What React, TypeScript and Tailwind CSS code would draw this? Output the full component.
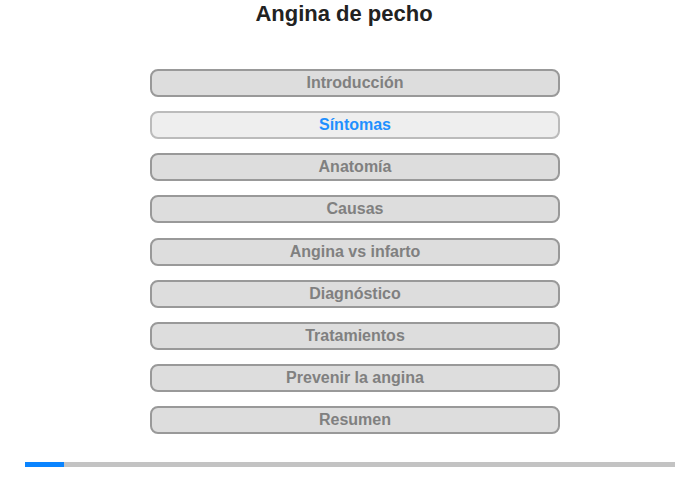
import React from "react";

const items = [
  "Introducción",
  "Síntomas",
  "Anatomía",
  "Causas",
  "Angina vs infarto",
  "Diagnóstico",
  "Tratamientos",
  "Prevenir la angina",
  "Resumen",
];

export default function App() {
  return (
    <div className="w-[700px] h-[480px] bg-white flex flex-col items-center" style={{ fontFamily: '"Liberation Sans", Arial, sans-serif' }}>
      <h1 className="mt-[1px] mr-[12px] h-[26px] leading-[26px] text-[22px] font-bold text-[#222222]">Angina de pecho</h1>
      <div className="mt-[42px] ml-[10px] flex flex-col gap-[14.125px]">
        {items.map((t, i) => (
          <div
            key={t}
            className={
              i === 1
                ? "w-[410px] h-[28px] rounded-[8px] border-2 border-[#bbbbbb] bg-[#eeeeee] flex items-center justify-center text-[16px] font-bold text-[#1e90ff]"
                : "w-[410px] h-[28px] rounded-[8px] border-2 border-[#999999] bg-[#dddddd] flex items-center justify-center text-[16px] font-bold text-[#808080]"
            }
          >
            {t}
          </div>
        ))}
      </div>
      <div className="mt-[28px] w-[650px] h-[5px] bg-[#c3c3c3] flex">
        <div className="w-[39px] h-full bg-[#0a84ff]" />
      </div>
    </div>
  );
}
